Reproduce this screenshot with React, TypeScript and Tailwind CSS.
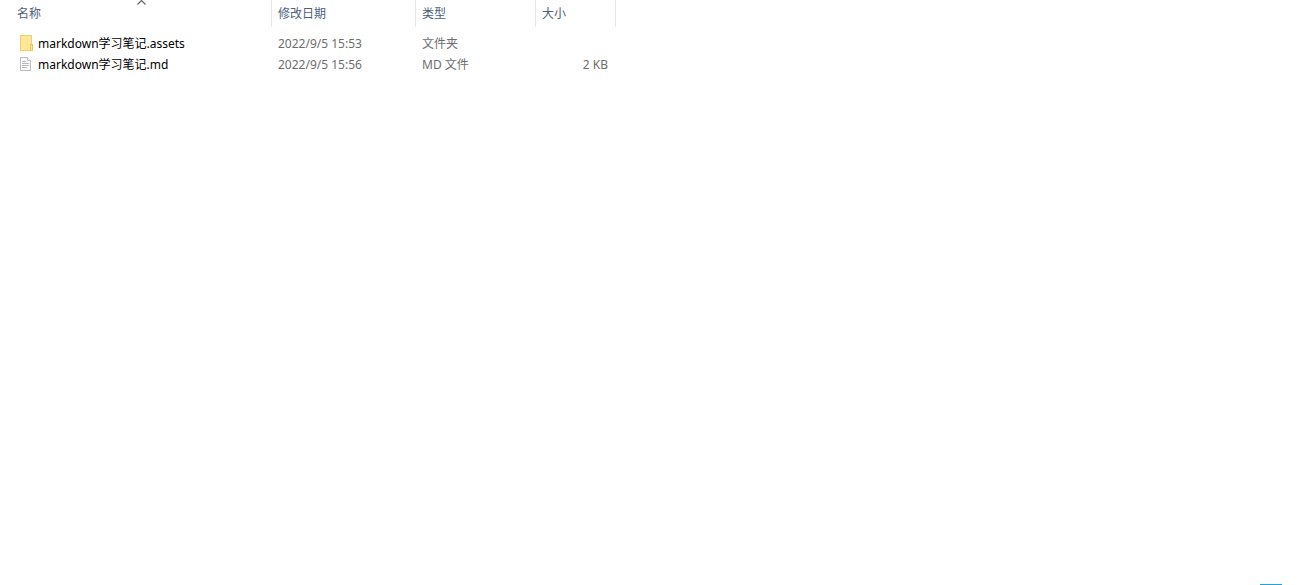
type Entry = {
  name: string;
  modified: string;
  type: string;
  size: string;
  kind: "folder" | "document";
};

const entries: Entry[] = [
  { name: "markdown学习笔记.assets", modified: "2022/9/5 15:53", type: "文件夹", size: "", kind: "folder" },
  { name: "markdown学习笔记.md", modified: "2022/9/5 15:56", type: "MD 文件", size: "2 KB", kind: "document" },
];

function FolderIcon() {
  return (
    <svg className="mt-0.5 h-4 w-4 shrink-0" viewBox="0 0 16 16" shapeRendering="crispEdges" aria-hidden="true">
      <rect x="2" y="0" width="12" height="16" fill="#f0cf66" />
      <rect x="3" y="1" width="10" height="14" fill="#ffe699" />
      <rect x="12" y="9" width="3" height="7" fill="#edc54f" />
      <rect x="13" y="10" width="1" height="5" fill="#ffe699" />
    </svg>
  );
}

function DocumentIcon() {
  return (
    <svg className="mt-0.5 h-4 w-4 shrink-0" viewBox="0 0 16 16" aria-hidden="true">
      <path d="M2.5 1.5h7l3 3v10h-10z" fill="#fafafa" stroke="#bdbdbd" />
      <path d="M9.5 1.5v3h3" fill="#ffffff" stroke="#bdbdbd" />
      <path d="M4 5.5h4M4 7.5h7M4 9.5h7M4 11.5h5" stroke="#b3bac3" />
    </svg>
  );
}

function SortArrow() {
  return (
    <svg className="absolute left-[137px] top-0 h-[5px] w-[9px]" viewBox="0 0 9 5" aria-hidden="true">
      <path d="M0.5 4.5L4.5 0.5L8.5 4.5" fill="none" stroke="#666666" strokeWidth="1.2" />
    </svg>
  );
}

const headCell = "h-[27px] border-r border-[#e5e5e5] p-0 text-left font-normal";
const headButton = "block w-full pl-1.5 text-left leading-[27px]";

export default function App() {
  return (
    <main className="flex min-h-screen flex-col justify-between bg-white font-['Noto_Sans','Noto_Sans_CJK_SC',sans-serif] text-xs">
      <table className="w-[616px] table-fixed border-separate border-spacing-0">
        <colgroup>
          <col className="w-[272px]" />
          <col className="w-36" />
          <col className="w-[120px]" />
          <col className="w-20" />
        </colgroup>
        <thead className="text-[#4c607a]">
          <tr>
            <th className={headCell} aria-sort="ascending">
              <button className="relative block w-full pl-[17px] text-left leading-[27px]">
                名称
                <SortArrow />
              </button>
            </th>
            <th className={headCell}>
              <button className={headButton}>修改日期</button>
            </th>
            <th className={headCell}>
              <button className={headButton}>类型</button>
            </th>
            <th className={headCell}>
              <button className={headButton}>大小</button>
            </th>
          </tr>
        </thead>
        <tbody className="text-[#6d6d6d] before:block before:h-1.5">
          {entries.map((entry) => (
            <tr key={entry.name} className="h-[21px]">
              <td className="p-0 pl-[18px]">
                <a href="#" className="flex items-start gap-1 leading-[21px] text-black">
                  {entry.kind === "folder" ? <FolderIcon /> : <DocumentIcon />}
                  {entry.name}
                </a>
              </td>
              <td className="p-0 pl-1.5 leading-[21px]">{entry.modified}</td>
              <td className="p-0 pl-1.5 leading-[21px]">{entry.type}</td>
              <td className="p-0 pr-2 text-right leading-[21px]">{entry.size}</td>
            </tr>
          ))}
        </tbody>
      </table>
      <div className="mr-[27px] h-px w-[22px] self-end bg-[#26a0da]" />
    </main>
  );
}
